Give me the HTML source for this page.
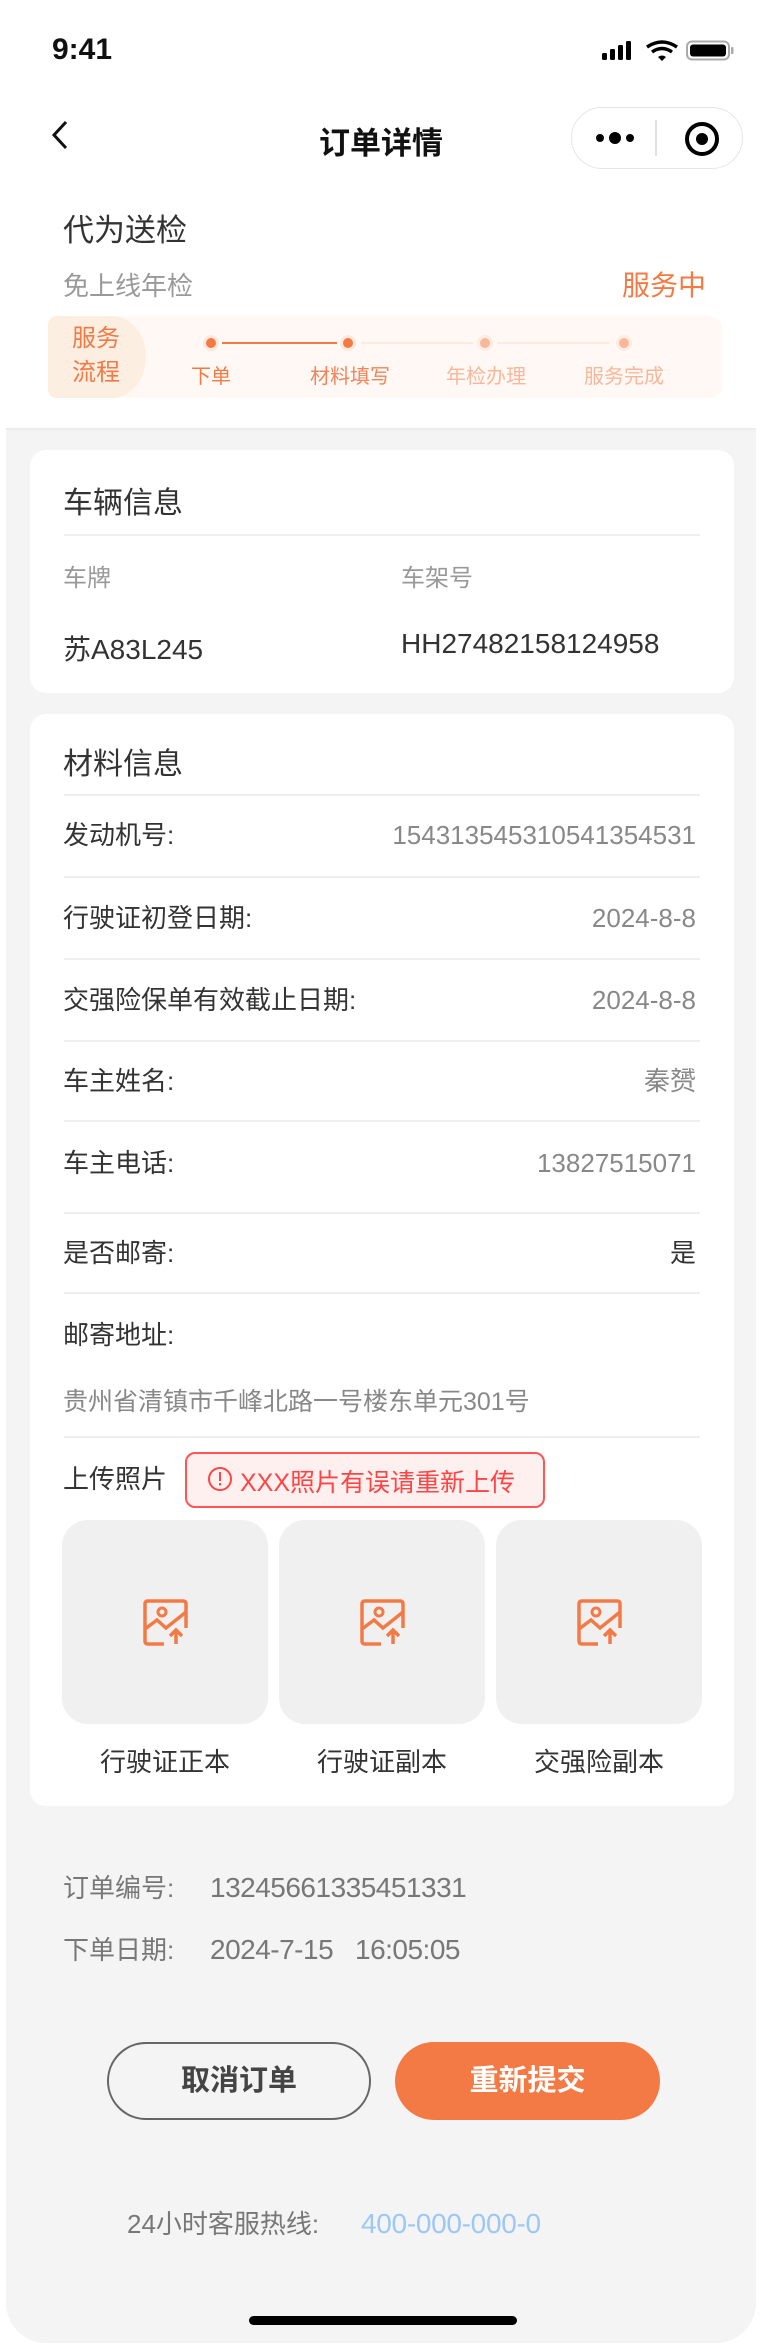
<!DOCTYPE html>
<html><head><meta charset="utf-8"><style>
*{margin:0;padding:0;box-sizing:border-box}
body{width:762px;height:2347px;background:#fff;font-family:"Liberation Sans","Noto Sans CJK SC",sans-serif;position:relative;overflow:hidden;color:#333}
.a{position:absolute;white-space:nowrap}
.grey{position:absolute;left:6px;right:6px;top:428px;bottom:4px;background:#f4f4f4;border-radius:0 0 40px 40px;border-top:2px solid #ececec}
.card{position:absolute;left:30px;width:704px;background:#fff;border-radius:16px}
.div{position:absolute;left:34px;right:34px;height:2px;background:#efefef}
.lbl{position:absolute;left:33px;font-size:26px;color:#333;line-height:30px}
.val{position:absolute;right:38px;font-size:26px;color:#888;line-height:30px}
.ph{position:absolute;top:806px;width:206px;height:204px;background:#f0f0f0;border-radius:26px}
.ph svg{position:absolute;left:80px;top:78px}
.pl{position:absolute;top:1028px;width:206px;text-align:center;font-size:26px;color:#333}
.ft{position:absolute;left:63px;line-height:36px;font-size:26px;color:#777;white-space:nowrap}
.ft b{font-weight:normal;font-size:28px;letter-spacing:-0.5px;position:absolute;left:147px}
</style></head><body>
<div class="a" style="left:52px;top:33px;font-size:30px;font-weight:bold;color:#111">9:41</div>
<svg class="a" style="left:602px;top:40px" width="132" height="22" viewBox="0 0 132 22">
<rect x="0" y="13" width="5" height="7" rx="1.5"/><rect x="8" y="9" width="5" height="11" rx="1.5"/><rect x="16" y="5" width="5" height="15" rx="1.5"/><rect x="24" y="1" width="5" height="19" rx="1.5"/>
<path d="M45 7 Q60 -3 75 7" stroke="#000" stroke-width="3.5" fill="none"/><path d="M50 12 Q60 5 70 12" stroke="#000" stroke-width="3.5" fill="none"/><path d="M56 17 L60 21 L64 17 Q60 14 56 17Z"/>
<rect x="85" y="1.5" width="42" height="18" rx="5" fill="none" stroke="#aaa" stroke-width="2"/><rect x="88" y="4.5" width="36" height="12" rx="3"/><rect x="129" y="7" width="2.5" height="7" rx="1" fill="#aaa"/>
</svg>
<svg class="a" style="left:50px;top:120px" width="20" height="30"><path d="M16 2 L4 15 L16 28" stroke="#111" stroke-width="3" fill="none"/></svg>
<div class="a" style="left:0;width:762px;text-align:center;top:118px;font-size:31px;color:#111;font-weight:bold">订单详情</div>
<div class="a" style="left:571px;top:107px;width:172px;height:62px;border:1.5px solid #e6e6e6;border-radius:31px"></div>
<div class="a" style="left:655px;top:120px;width:1.5px;height:36px;background:#e0e0e0"></div>
<svg class="a" style="left:595px;top:128px" width="44" height="20"><circle cx="5" cy="10" r="4"/><circle cx="20" cy="10" r="6"/><circle cx="35" cy="10" r="4"/></svg>
<svg class="a" style="left:682px;top:119px" width="40" height="40"><circle cx="20" cy="20" r="15" fill="none" stroke="#000" stroke-width="4"/><circle cx="20" cy="20" r="6"/></svg>
<div class="a" style="left:63px;top:205px;font-size:31px;color:#333">代为送检</div>
<div class="a" style="left:63px;top:266px;font-size:26px;color:#999">免上线年检</div>
<div class="a" style="right:56px;top:264px;font-size:28px;color:#f47a45">服务中</div>
<div class="a" style="left:48px;top:316px;width:674px;height:82px;background:#fff8f4;border-radius:12px"></div>
<div class="a" style="left:48px;top:316px;width:98px;height:82px;background:#fdeee2;border-radius:12px 50px 50px 12px / 12px 60px 60px 12px"></div>
<div class="a" style="left:72px;top:322px;font-size:24px;line-height:34px;color:#f47a45;white-space:normal;width:52px">服务流程</div>
<div class="a" style="left:222px;top:342px;width:115px;height:2px;background:#f47a45"></div>
<div class="a" style="left:361px;top:342px;width:112px;height:2px;background:#fcebdf"></div>
<div class="a" style="left:497px;top:342px;width:112px;height:2px;background:#fcebdf"></div>
<div class="a" style="left:203px;top:335px;width:16px;height:16px;border-radius:50%;background:#fde8dc"></div><div class="a" style="left:206px;top:338px;width:10px;height:10px;border-radius:50%;background:#f47a45"></div>
<div class="a" style="left:340px;top:335px;width:16px;height:16px;border-radius:50%;background:#fde8dc"></div><div class="a" style="left:343px;top:338px;width:10px;height:10px;border-radius:50%;background:#f47a45"></div>
<div class="a" style="left:477px;top:335px;width:16px;height:16px;border-radius:50%;background:#fdece2"></div><div class="a" style="left:480px;top:338px;width:10px;height:10px;border-radius:50%;background:#f8b79a"></div>
<div class="a" style="left:616px;top:335px;width:16px;height:16px;border-radius:50%;background:#fdece2"></div><div class="a" style="left:619px;top:338px;width:10px;height:10px;border-radius:50%;background:#f8b79a"></div>
<div class="a" style="left:191px;top:360px;font-size:20px;color:#f47a45">下单</div>
<div class="a" style="left:310px;top:360px;font-size:20px;color:#f0845a">材料填写</div>
<div class="a" style="left:446px;top:360px;font-size:20px;color:#f8b79a">年检办理</div>
<div class="a" style="left:584px;top:360px;font-size:20px;color:#f8b79a">服务完成</div>

<div class="grey"></div>
<div class="card" style="top:450px;height:243px">
<div class="a" style="left:33px;top:28px;font-size:30px;color:#333">车辆信息</div>
<div class="div" style="top:84px"></div>
<div class="a" style="left:33px;top:108px;font-size:24px;color:#999">车牌</div>
<div class="a" style="left:371px;top:108px;font-size:24px;color:#999">车架号</div>
<div class="a" style="left:33px;top:178px;font-size:28px;color:#333">苏A83L245</div>
<div class="a" style="left:371px;top:178px;font-size:28px;color:#333">HH27482158124958</div>
</div>
<div class="card" style="top:714px;height:1092px">
<div class="a" style="left:33px;top:25px;font-size:30px;color:#333">材料信息</div>
<div class="div" style="top:80px"></div>
<div class="lbl" style="top:106px">发动机号:</div><div class="val" style="top:106px">154313545310541354531</div>
<div class="div" style="top:162px"></div>
<div class="lbl" style="top:189px">行驶证初登日期:</div><div class="val" style="top:189px">2024-8-8</div>
<div class="div" style="top:244px"></div>
<div class="lbl" style="top:271px">交强险保单有效截止日期:</div><div class="val" style="top:271px">2024-8-8</div>
<div class="div" style="top:326px"></div>
<div class="lbl" style="top:352px">车主姓名:</div><div class="val" style="top:352px">秦赟</div>
<div class="div" style="top:406px"></div>
<div class="lbl" style="top:434px">车主电话:</div><div class="val" style="top:434px">13827515071</div>
<div class="div" style="top:498px"></div>
<div class="lbl" style="top:524px">是否邮寄:</div><div class="val" style="top:524px;color:#333">是</div>
<div class="div" style="top:578px"></div>
<div class="lbl" style="top:606px">邮寄地址:</div>
<div class="a" style="left:33px;top:668px;font-size:25px;color:#888">贵州省清镇市千峰北路一号楼东单元301号</div>
<div class="div" style="top:722px"></div>
<div class="lbl" style="top:750px">上传照片</div>
<div class="a" style="left:155px;top:738px;width:360px;height:56px;border:2px solid #f55;border-radius:10px;background:#fff0f0"></div>
<svg class="a" style="left:177px;top:752px" width="26" height="26"><circle cx="13" cy="13" r="11" fill="none" stroke="#f44" stroke-width="2"/><rect x="12" y="6" width="2" height="9" fill="#f44"/><rect x="12" y="17" width="2" height="2.5" fill="#f44"/></svg>
<div class="a" style="left:210px;top:749px;font-size:25px;color:#f44">XXX照片有误请重新上传</div>
<div class="ph" style="left:32px"><svg width="48" height="48" viewBox="0 0 48 48"><path d="M22 46 H6 Q3 46 3 43 V6 Q3 3 6 3 H41 Q44 3 44 6 V30" stroke="#f47a45" stroke-width="3.5" fill="none"/><circle cx="20" cy="14" r="4" fill="none" stroke="#f47a45" stroke-width="3"/><path d="M3 31 L15 22 L24 30 L44 14" stroke="#f47a45" stroke-width="3.5" fill="none"/><path d="M34 46 V32 M28 38 L34 32 L40 38" stroke="#f47a45" stroke-width="3.5" fill="none"/></svg></div>
<div class="ph" style="left:249px"><svg width="48" height="48" viewBox="0 0 48 48"><path d="M22 46 H6 Q3 46 3 43 V6 Q3 3 6 3 H41 Q44 3 44 6 V30" stroke="#f47a45" stroke-width="3.5" fill="none"/><circle cx="20" cy="14" r="4" fill="none" stroke="#f47a45" stroke-width="3"/><path d="M3 31 L15 22 L24 30 L44 14" stroke="#f47a45" stroke-width="3.5" fill="none"/><path d="M34 46 V32 M28 38 L34 32 L40 38" stroke="#f47a45" stroke-width="3.5" fill="none"/></svg></div>
<div class="ph" style="left:466px"><svg width="48" height="48" viewBox="0 0 48 48"><path d="M22 46 H6 Q3 46 3 43 V6 Q3 3 6 3 H41 Q44 3 44 6 V30" stroke="#f47a45" stroke-width="3.5" fill="none"/><circle cx="20" cy="14" r="4" fill="none" stroke="#f47a45" stroke-width="3"/><path d="M3 31 L15 22 L24 30 L44 14" stroke="#f47a45" stroke-width="3.5" fill="none"/><path d="M34 46 V32 M28 38 L34 32 L40 38" stroke="#f47a45" stroke-width="3.5" fill="none"/></svg></div>
<div class="pl" style="left:32px">行驶证正本</div>
<div class="pl" style="left:249px">行驶证副本</div>
<div class="pl" style="left:466px">交强险副本</div>
</div>
<div class="ft" style="top:1870px">订单编号:<b>13245661335451331</b></div>
<div class="ft" style="top:1932px">下单日期:<b>2024-7-15&nbsp;&nbsp; 16:05:05</b></div>
<div class="a" style="left:107px;top:2042px;width:264px;height:78px;border:2px solid #666;border-radius:39px;text-align:center;line-height:74px;font-size:29px;font-weight:bold;color:#444">取消订单</div>
<div class="a" style="left:395px;top:2042px;width:265px;height:78px;background:#f47a45;border-radius:39px;text-align:center;line-height:78px;font-size:29px;font-weight:bold;color:#fff">重新提交</div>
<div class="ft" style="left:127px;top:2206px">24小时客服热线:<b style="left:234px;color:#9cc8f5;letter-spacing:-0.3px">400-000-000-0</b></div>
<div class="a" style="left:249px;top:2316px;width:268px;height:9px;border-radius:5px;background:#000"></div>
</body></html>
